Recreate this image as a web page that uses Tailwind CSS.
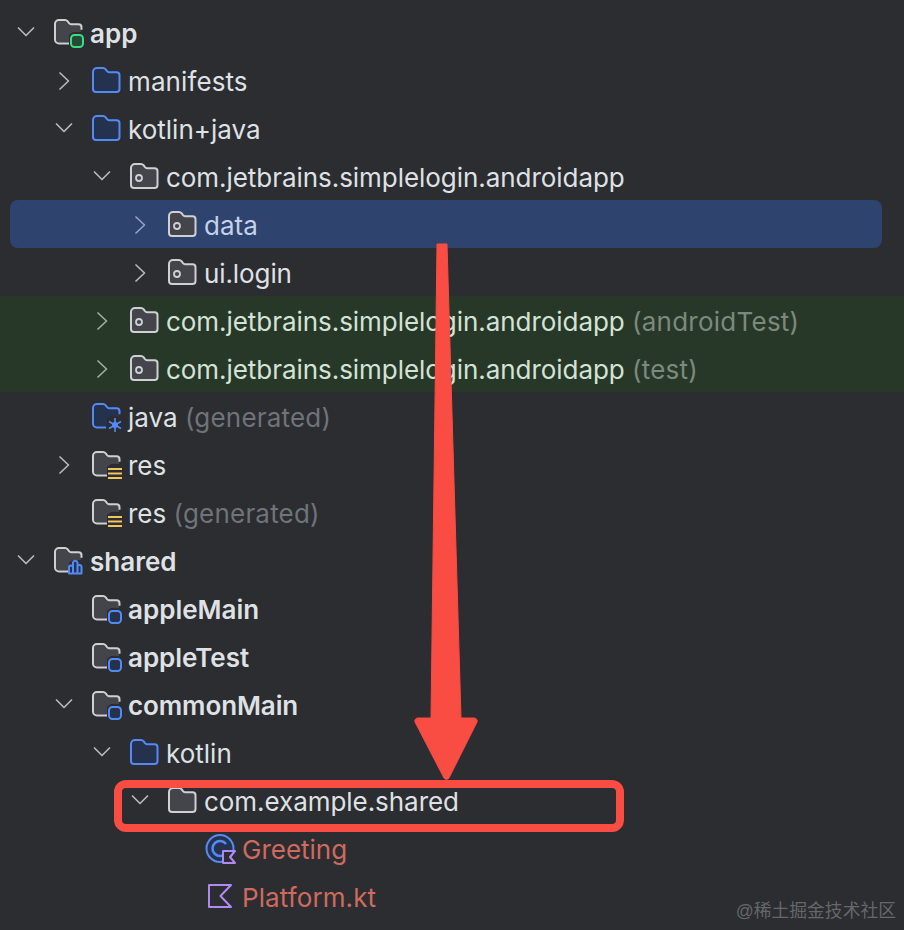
<!doctype html>
<html>
<head>
  <meta charset="UTF-8" />
  <script src="https://cdn.jsdelivr.net/npm/@tailwindcss/browser@4"></script>
</head>
<body class="bg-[#2b2d30]">

<svg class="hidden">
  <symbol id="down" viewBox="0 0 20 20"><path d="M2.5 5 L10 12.5 L17.5 5" fill="none" stroke="currentColor" stroke-width="1.7" stroke-linecap="round" stroke-linejoin="round"/></symbol>
  <symbol id="right" viewBox="0 0 20 20"><path d="M6 2 L14.5 10 L6 18" fill="none" stroke="currentColor" stroke-width="1.7" stroke-linecap="round" stroke-linejoin="round"/></symbol>
  <symbol id="blue" viewBox="0 0 32 32"><path d="M2 7a4 4 0 0 1 4-4h6q1.5 0 2.5 1.2l1.5 2q.8 1 2 1h7.500a3 3 0 0 1 3 3v13.800a3 3 0 0 1-3 3h-20.500a3 3 0 0 1-3-3z" fill="#25324d" stroke="#548af7" stroke-width="2"/></symbol>
  <symbol id="gray" viewBox="0 0 32 32"><path d="M2 7a4 4 0 0 1 4-4h6q1.500 0 2.500 1.200l1.500 2q.8 1 2 1h7.500a3 3 0 0 1 3 3v13.800a3 3 0 0 1-3 3h-20.500a3 3 0 0 1-3-3z" fill="#43454a" stroke="#ced0d6" stroke-width="2"/></symbol>
  <symbol id="pkg" viewBox="0 0 32 32"><path d="M2 7a4 4 0 0 1 4-4h6q1.500 0 2.500 1.200l1.500 2q.8 1 2 1h7.500a3 3 0 0 1 3 3v13.800a3 3 0 0 1-3 3h-20.500a3 3 0 0 1-3-3z" fill="#43454a" stroke="#ced0d6" stroke-width="2"/><circle cx="10" cy="17" r="3" fill="none" stroke="#ced0d6" stroke-width="1.800"/></symbol>
  <symbol id="mod" viewBox="0 0 32 32"><path d="M3 7a3 3 0 0 1 3-3h6l4 4h12v7h-8l-4 3v7.500h-9a4 4 0 0 1-4-4z" fill="#43454a"/><path d="M16 26.500h-10a4 4 0 0 1-4-4v-15.500a4 4 0 0 1 4-4h6q1.500 0 2.500 1.200l1.500 2q.8 1 2 1h7.500a3 3 0 0 1 3 3v2.500" fill="none" stroke="#ced0d6" stroke-width="2"/></symbol>
  <symbol id="gen" viewBox="0 0 32 32"><path d="M3 7a3 3 0 0 1 3-3h6l4 4h12v7h-8l-4 3v7.500h-9a4 4 0 0 1-4-4z" fill="#25324d"/><path d="M15 26.500h-9a4 4 0 0 1-4-4v-15.500a4 4 0 0 1 4-4h6q1.500 0 2.500 1.200l1.500 2q.8 1 2 1h7.500a3 3 0 0 1 3 3v3" fill="none" stroke="#548af7" stroke-width="2"/><path d="M24 17v14M18 20.500l12 7M30 20.500l-12 7" stroke="#548af7" stroke-width="1.600"/><circle cx="24" cy="24" r="3" fill="#548af7"/></symbol>
</svg>

<div class="relative w-[904px] h-[930px] overflow-hidden pt-2 font-[Inter,sans-serif] text-[26px] text-[#dfe1e5]">

  <!-- app -->
  <div class="flex items-center h-12 pt-[2px] pl-4">
    <svg class="w-5 h-5 text-[#b4b8bf]"><use href="#down"/></svg>
    <svg class="w-8 h-8 ml-[17px] overflow-visible"><use href="#mod"/><rect x="18" y="18" width="12" height="12" rx="3.500" fill="#254a35" stroke="#3ddc84" stroke-width="2"/></svg>
    <span class="ml-[5px] font-semibold">app</span>
  </div>
  <div class="flex items-center h-12 pt-[2px] pl-[54px]">
    <svg class="w-5 h-5 text-[#b4b8bf]"><use href="#right"/></svg>
    <svg class="w-8 h-8 ml-[17px]"><use href="#blue"/></svg>
    <span class="ml-[5px] tracking-[0.1px]">manifests</span>
  </div>
  <div class="flex items-center h-12 pt-[2px] pl-[54px]">
    <svg class="w-5 h-5 text-[#b4b8bf]"><use href="#down"/></svg>
    <svg class="w-8 h-8 ml-[17px]"><use href="#blue"/></svg>
    <span class="ml-[5px]">kotlin+java</span>
  </div>
  <div class="flex items-center h-12 pt-[2px] pl-[92px]">
    <svg class="w-5 h-5 text-[#b4b8bf]"><use href="#down"/></svg>
    <svg class="w-8 h-8 ml-[17px]"><use href="#pkg"/></svg>
    <span class="ml-[5px] tracking-[-0.05px]">com.jetbrains.simplelogin.androidapp</span>
  </div>
  <div class="flex items-center h-12 pt-[2px] ml-[10px] mr-[22px] pl-[120px] rounded-lg bg-[#2e436e] text-[#c5d1e8]">
    <svg class="w-5 h-5 text-[#8fa3c9]"><use href="#right"/></svg>
    <svg class="w-8 h-8 ml-[17px]"><use href="#pkg"/></svg>
    <span class="ml-[5px]">data</span>
  </div>
  <div class="flex items-center h-12 pt-[2px] pl-[130px]">
    <svg class="w-5 h-5 text-[#b4b8bf]"><use href="#right"/></svg>
    <svg class="w-8 h-8 ml-[17px]"><use href="#pkg"/></svg>
    <span class="ml-[5px] tracking-[-0.1px]">ui.login</span>
  </div>

  <!-- test source roots -->
  <div class="bg-[#283828] text-[#d3e3d6]">
    <div class="flex items-center h-12 pt-[2px] pl-[92px]">
      <svg class="w-5 h-5 text-[#9cae9f]"><use href="#right"/></svg>
      <svg class="w-8 h-8 ml-[17px]"><use href="#pkg"/></svg>
      <span class="ml-[5px] tracking-[-0.05px]">com.jetbrains.simplelogin.androidapp <span class="tracking-[0.25px] text-[#7b8a7d]">(androidTest)</span></span>
    </div>
    <div class="flex items-center h-12 pt-[2px] pl-[92px]">
      <svg class="w-5 h-5 text-[#9cae9f]"><use href="#right"/></svg>
      <svg class="w-8 h-8 ml-[17px]"><use href="#pkg"/></svg>
      <span class="ml-[5px] tracking-[-0.05px]">com.jetbrains.simplelogin.androidapp <span class="tracking-[0.25px] text-[#7b8a7d]">(test)</span></span>
    </div>
  </div>

  <div class="flex items-center h-12 pt-[2px] pl-[74px]">
    <svg class="w-8 h-8 ml-[17px] overflow-visible"><use href="#gen"/></svg>
    <span class="ml-[5px]">java <span class="tracking-[0.2px] text-[#6f737a]">(generated)</span></span>
  </div>
  <div class="flex items-center h-12 pt-[2px] pl-[54px]">
    <svg class="w-5 h-5 text-[#b4b8bf]"><use href="#right"/></svg>
    <svg class="w-8 h-8 ml-[17px] overflow-visible"><use href="#mod"/><path d="M17 20h14M17 24.500h14M17 29h14" stroke="#f2c55c" stroke-width="2"/></svg>
    <span class="ml-[5px]">res</span>
  </div>
  <div class="flex items-center h-12 pt-[2px] pl-[74px]">
    <svg class="w-8 h-8 ml-[17px] overflow-visible"><use href="#mod"/><path d="M17 20h14M17 24.500h14M17 29h14" stroke="#f2c55c" stroke-width="2"/></svg>
    <span class="ml-[5px]">res <span class="tracking-[0.2px] text-[#6f737a]">(generated)</span></span>
  </div>

  <!-- shared -->
  <div class="flex items-center h-12 pt-[2px] pl-4">
    <svg class="w-5 h-5 text-[#b4b8bf]"><use href="#down"/></svg>
    <svg class="w-8 h-8 ml-[17px] overflow-visible"><use href="#mod"/><path d="M16 28.500v-6a2 2 0 0 1 4 0v6zM20 28.500v-11a2.300 2.300 0 0 1 4.500 0v11zM24.500 28.500v-6.500a2 2 0 0 1 4 0v6.500z" fill="#25324d" stroke="#548af7" stroke-width="2" stroke-linejoin="round"/></svg>
    <span class="ml-[5px] font-semibold">shared</span>
  </div>
  <div class="flex items-center h-12 pt-[2px] pl-[74px]">
    <svg class="w-8 h-8 ml-[17px] overflow-visible"><use href="#mod"/><rect x="18" y="18" width="12" height="12" rx="3.500" fill="#25324d" stroke="#548af7" stroke-width="2"/></svg>
    <span class="ml-[5px] font-semibold">appleMain</span>
  </div>
  <div class="flex items-center h-12 pt-[2px] pl-[74px]">
    <svg class="w-8 h-8 ml-[17px] overflow-visible"><use href="#mod"/><rect x="18" y="18" width="12" height="12" rx="3.500" fill="#25324d" stroke="#548af7" stroke-width="2"/></svg>
    <span class="ml-[5px] font-semibold tracking-[-0.05px]">appleTest</span>
  </div>
  <div class="flex items-center h-12 pt-[2px] pl-[54px]">
    <svg class="w-5 h-5 text-[#b4b8bf]"><use href="#down"/></svg>
    <svg class="w-8 h-8 ml-[17px] overflow-visible"><use href="#mod"/><rect x="18" y="18" width="12" height="12" rx="3.500" fill="#25324d" stroke="#548af7" stroke-width="2"/></svg>
    <span class="ml-[5px] font-semibold tracking-[-0.1px]">commonMain</span>
  </div>
  <div class="flex items-center h-12 pt-[2px] pl-[92px]">
    <svg class="w-5 h-5 text-[#b4b8bf]"><use href="#down"/></svg>
    <svg class="w-8 h-8 ml-[17px]"><use href="#blue"/></svg>
    <span class="ml-[5px]">kotlin</span>
  </div>
  <div class="flex items-center h-12 pt-[2px] pl-[130px]">
    <svg class="w-5 h-5 text-[#b4b8bf]"><use href="#down"/></svg>
    <svg class="w-8 h-8 ml-[17px]"><use href="#gray"/></svg>
    <span class="ml-[5px] tracking-[-0.05px]">com.example.shared</span>
  </div>
  <div class="flex items-center h-12 pt-[2px] pl-[205px] text-[#cf6a5f]">
    <svg class="w-8 h-8 overflow-visible" viewBox="0 0 32 32"><circle cx="15" cy="15.500" r="13.500" fill="#25324d" stroke="#548af7" stroke-width="2"/><path d="M21 20a7.500 7.500 0 1 1 0-9" fill="none" stroke="#548af7" stroke-width="2.500"/><path d="M18 18h12l-5 6 5 6h-12z" fill="#2b2d30" stroke="#b189f5" stroke-width="2" stroke-linejoin="round"/></svg>
    <span class="ml-[5px]">Greeting</span>
  </div>
  <div class="flex items-center h-12 pt-[2px] pl-[205px] text-[#cf6a5f]">
    <svg class="w-8 h-8" viewBox="0 0 32 32"><path d="M4 4h22l-10.500 11 10.500 11h-22z" fill="#2b2d30" stroke="#b189f5" stroke-width="2" stroke-linejoin="round"/></svg>
    <span class="ml-[5px] tracking-[0.1px]">Platform.kt</span>
  </div>

  <!-- annotation on top of the screenshot -->
  <svg class="absolute left-0 top-0 w-[904px] h-[930px] pointer-events-none" viewBox="0 0 904 930">
    <path d="M437 244h10l14 474h13a3 3 0 0 1 3 4l-28 56a3 3 0 0 1-5 0l-29-56a3 3 0 0 1 3-4h13z" fill="#f94c43" stroke="#f94c43" stroke-width="1" stroke-linejoin="round"/>
  </svg>
  <div class="absolute left-[114px] top-[780px] w-[510px] h-[52px] border-8 border-[#f94c43] rounded-xl"></div>

  <div class="absolute right-2 top-[900px] text-[17.8px] leading-[22px] text-[#65676b] font-['Liberation_Sans','Noto_Sans_CJK_SC',sans-serif]">@稀土掘金技术社区</div>
</div>

</body>
</html>
